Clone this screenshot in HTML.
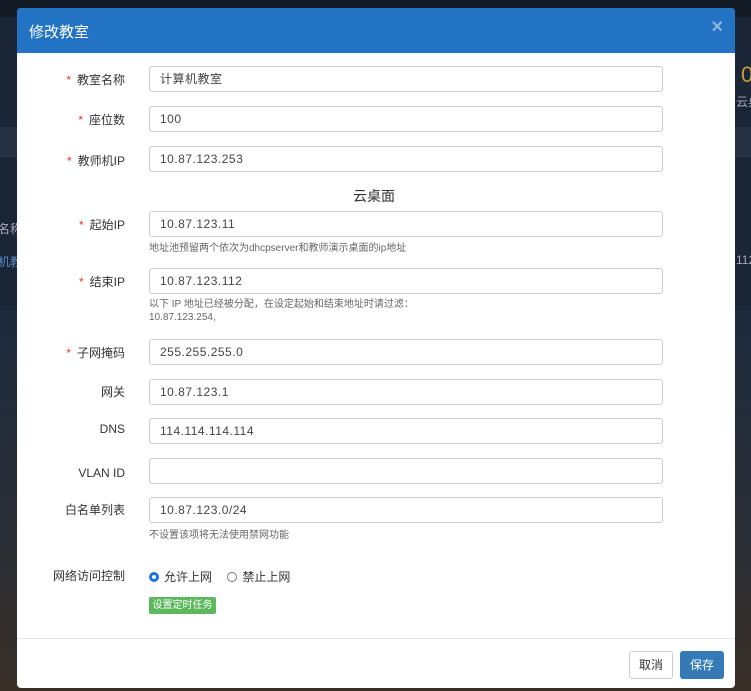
<!DOCTYPE html>
<html><head><meta charset="utf-8"><style>
*{box-sizing:border-box;margin:0;padding:0}
body{width:751px;height:691px;overflow:hidden;background:#1a2535;font-family:"Liberation Sans","Noto Sans CJK SC",sans-serif;position:relative}
.bg1{position:absolute;left:0;top:0;width:751px;height:17px;background:#121a26}
.bg2{position:absolute;left:0;top:127px;width:751px;height:30px;background:#263244}
.bg3{position:absolute;left:0;top:310px;width:751px;height:381px;background:linear-gradient(#1c2a3c,#2a2e36 60%,#3a3028)}
.side{position:absolute;color:#aab;font-size:12px;white-space:nowrap}
.modal{position:absolute;left:17px;top:8px;width:718px;height:680px;background:#fff;border-radius:4px;overflow:hidden}
.hd{height:45px;background:#2373c4;color:#fff;font-size:15px;padding:13px 0 0 12px}
.x{position:absolute;right:12px;top:8px;color:#8fb6e0;font-size:20px;font-weight:bold}
.lab{position:absolute;font-size:12px;color:#333;text-align:right;width:108px;left:0;line-height:14px}
.lab b{color:#e33;font-weight:normal;margin-right:6px}
.in{position:absolute;left:132px;width:514px;height:26px;border:1px solid #ccc;border-radius:3px;font-size:12px;color:#444;padding:5px 10px;letter-spacing:.5px;line-height:14px}
.help{position:absolute;left:132px;font-size:10px;color:#666;line-height:13px}
.ft{position:absolute;left:0;top:630px;width:718px;border-top:1px solid #e5e5e5}
.btn{position:absolute;top:643px;height:28px;font-size:12px;border-radius:3px;line-height:26px;text-align:center}
</style></head><body>
<div class="bg1"></div><div class="bg3"></div><div class="bg2"></div>
<div class="side" style="left:-2px;top:220px">名称</div>
<div class="side" style="left:-2px;top:253px;color:#5a8ac8">机教</div>
<div class="side" style="left:736px;top:253px">112</div>
<div class="side" style="left:736px;top:93px">云桌</div>
<div class="side" style="left:741px;top:62px;color:#c89a3a;font-size:22px">0</div>
<div class="modal">
<div class="hd">修改教室</div><div class="x">×</div>
<div class="lab" style="top:65px"><b>*</b>教室名称</div><div class="in" style="top:58px">计算机教室</div>
<div class="lab" style="top:105px"><b>*</b>座位数</div><div class="in" style="top:98px">100</div>
<div class="lab" style="top:146px"><b>*</b>教师机IP</div><div class="in" style="top:138px">10.87.123.253</div>
<div style="position:absolute;left:336px;top:178px;font-size:14px;color:#333">云桌面</div>
<div class="lab" style="top:210px"><b>*</b>起始IP</div><div class="in" style="top:203px">10.87.123.11</div>
<div class="help" style="top:234px">地址池预留两个依次为dhcpserver和教师演示桌面的ip地址</div>
<div class="lab" style="top:267px"><b>*</b>结束IP</div><div class="in" style="top:260px">10.87.123.112</div>
<div class="help" style="top:290px">以下 IP 地址已经被分配，在设定起始和结束地址时请过滤：<br>10.87.123.254,</div>
<div class="lab" style="top:338px"><b>*</b>子网掩码</div><div class="in" style="top:331px">255.255.255.0</div>
<div class="lab" style="top:377px">网关</div><div class="in" style="top:371px">10.87.123.1</div>
<div class="lab" style="top:414px">DNS</div><div class="in" style="top:410px">114.114.114.114</div>
<div class="lab" style="top:458px">VLAN ID</div><div class="in" style="top:450px"></div>
<div class="lab" style="top:495px">白名单列表</div><div class="in" style="top:489px">10.87.123.0/24</div>
<div class="help" style="top:521px">不设置该项将无法使用禁网功能</div>
<div class="lab" style="top:561px">网络访问控制</div>
<div style="position:absolute;left:132px;top:560px;font-size:12px;color:#333">
<span style="display:inline-block;width:10px;height:10px;border-radius:50%;border:3px solid #1a73e8;vertical-align:-1px;margin-right:5px"></span>允许上网
<span style="display:inline-block;width:10px;height:10px;border-radius:50%;border:1px solid #777;vertical-align:-1px;margin:0 5px 0 12px"></span>禁止上网</div>
<div style="position:absolute;left:132px;top:589px;width:67px;height:17px;background:#5cb85c;border-radius:2px;color:#fff;font-size:10px;text-align:center;line-height:17px">设置定时任务</div>
<div class="ft"></div>
<div class="btn" style="left:612px;width:44px;border:1px solid #ccc;color:#333">取消</div>
<div class="btn" style="left:663px;width:44px;background:#337ab7;color:#fff;line-height:28px">保存</div>
</div>
</body></html>
